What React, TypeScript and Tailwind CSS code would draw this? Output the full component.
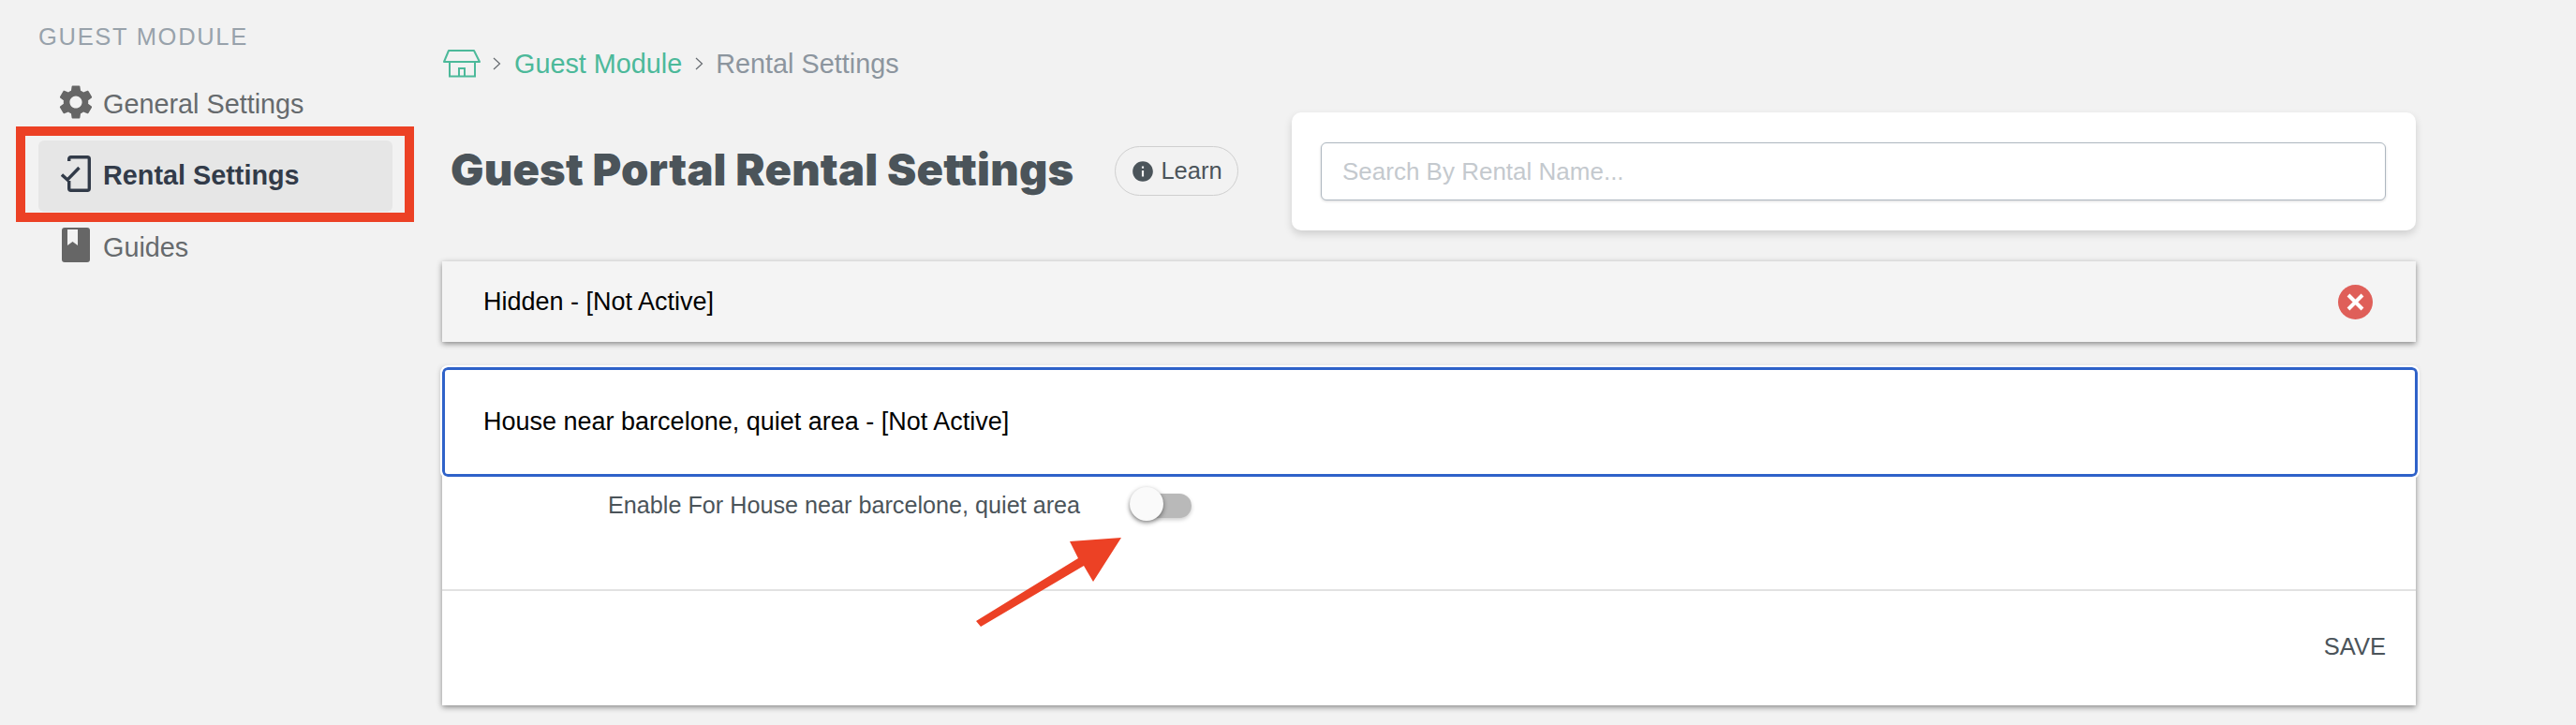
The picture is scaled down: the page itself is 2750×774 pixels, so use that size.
import { MdSettings, MdInfo } from "react-icons/md";

const sans = "font-['Liberation_Sans',Arial,sans-serif]";

function PhoneCheck() {
  return (
    <svg width="36" height="42" viewBox="0 0 36 42" fill="none" stroke="#323b49" strokeWidth="3.400" className="absolute left-[24px] top-[15px]">
      <path d="M8.700 7V4.700a2 2 0 0 1 2-2h17.600a2 2 0 0 1 2 2v31.600a2 2 0 0 1-2 2H10.700a2 2 0 0 1-2-2V28" strokeLinejoin="round" />
      <path d="M1 21.500l6 5.500 12.500-13" />
    </svg>
  );
}

function GuideBook() {
  return (
    <svg width="30" height="37" viewBox="0 0 30 37" className="absolute left-[25px] top-[17px]">
      <path fill="#666666" d="M3 0h24a3 3 0 0 1 3 3v31a3 3 0 0 1-3 3H3a3 3 0 0 1-3-3V3a3 3 0 0 1 3-3z" />
      <path fill="#f2f2f2" d="M6 2h11v17l-5.500-4L6 19z" />
    </svg>
  );
}

function HomeIcon() {
  return (
    <svg width="40" height="30" viewBox="0 0 40 30" fill="none" stroke="#4cb99a" strokeWidth="2">
      <path d="M1 13L6 1h27l6 12z" strokeLinejoin="round" />
      <path d="M7 13v15.500h27V13" />
      <path d="M17 28.500V20h6v8.500" />
    </svg>
  );
}

function Chevron() {
  return (
    <svg width="9" height="14" viewBox="0 0 9 14" fill="none" stroke="#666b70" strokeWidth="1.200">
      <path d="M1 1l6.500 6L1 13" />
    </svg>
  );
}

export default function App() {
  return (
    <div className={`relative flex h-[774px] w-[2750px] overflow-hidden bg-[#f2f2f2] ${sans}`}>
      <aside className="w-[472px] shrink-0 pl-[41px]">
        <div className="h-[74px] pt-[25px] text-[25.500px] leading-[29px] tracking-[1.700px] text-[#98a2ab]">GUEST MODULE</div>
        <nav className="w-[378px]">
          <div className="relative flex h-[76px] items-center pl-[69px] text-[28.800px] text-[#666a6d]">
            <MdSettings className="absolute left-[18px] top-[13px] text-[#666666]" size={44} />
            General Settings
          </div>
          <div className="relative flex h-[76px] items-center rounded-[6px] bg-[#e6e6e6] pl-[69px] text-[28.800px] font-bold text-[#323b49]">
            <PhoneCheck />
            Rental Settings
            <div className="absolute -left-[24px] -top-[15px] h-[102px] w-[425px] border-[10px] border-[#ec4125]" />
          </div>
          <div className="relative flex h-[76px] items-center pl-[69px] pt-[2px] text-[28.800px] text-[#666a6d]">
            <GuideBook />
            Guides
          </div>
        </nav>
      </aside>

      <main className="w-[2107px] shrink-0">
        <div className="flex h-[120px] items-start gap-[13px] pl-[1px] pt-[53px] text-[28.800px] leading-[30px]">
          <HomeIcon />
          <span className="mt-[8px]"><Chevron /></span>
          <span className="ml-[1px] text-[#4cb99a]">Guest Module</span>
          <span className="ml-[1px] mt-[8px]"><Chevron /></span>
          <span className="text-[#8c959e]">Rental Settings</span>
        </div>

        <div className="flex h-[126px] items-start">
          <h1 className="mt-[33px] w-[718px] whitespace-nowrap pl-[9px] font-['Inter',sans-serif] text-[47px] font-black leading-[56px] tracking-[0.2px] text-[#4b545a]">
            Guest Portal Rental Settings
          </h1>
          <button className="mt-[36px] flex h-[53px] w-[132px] items-center justify-center gap-[6px] rounded-full border border-[#cfcfcf] text-[25.500px] text-[#4b545a]">
            <MdInfo size={26} className="text-[#4b545a]" />
            Learn
          </button>
          <div className="ml-[57px] flex h-[126px] w-[1200px] items-center rounded-[10px] bg-white pl-[31px] pr-[32px] shadow-[0_4px_8px_rgba(0,0,0,0.15)]">
            <input
              placeholder="Search By Rental Name..."
              className="h-[62px] w-full rounded-[6px] border border-[#aeb7c0] bg-white pl-[22px] text-[26px] text-[#4b545a] placeholder:text-[#c4c9ce] shadow-[0_1px_3px_rgba(0,0,0,0.15)]"
            />
          </div>
        </div>

        <div className="mt-[33px] flex h-[86px] items-center justify-between bg-[#f4f4f4] pl-[44px] pr-[46px] text-[27px] text-black shadow-[0_2px_6px_rgba(0,0,0,0.45)]">
          <span>Hidden - [Not Active]</span>
          <svg width="37" height="37" viewBox="0 0 37 37">
            <circle cx="18.500" cy="18.500" r="18.500" fill="#df5f59" />
            <path d="M11 11l15 15M26 11L11 26" stroke="#ffffff" strokeWidth="4" />
          </svg>
        </div>

        <div className="mt-[27px] h-[361px] bg-white shadow-[0_2px_6px_rgba(0,0,0,0.45)]">
          <div className="flex h-[117px] w-[2109px] items-center rounded-[6px] border-[3.500px] border-[#2f62c9] bg-white pl-[41px] text-[27px] text-black outline-2 outline-white">
            House near barcelone, quiet area - [Not Active]
          </div>
          <div className="flex h-[122px] items-start border-b-2 border-[#e2e2e2] pl-[177px] pt-[10px]">
            <span className="mt-[4px] w-[558px] text-[25.200px] leading-[32px] text-[#4b545a]">Enable For House near barcelone, quiet area</span>
            <span className="relative mt-[8px] block h-[26px] w-[65px] rounded-full bg-[#b9b9b9] shadow-[0_2px_4px_rgba(0,0,0,0.2)]">
              <span className="absolute -left-[1px] -top-[7px] block h-[36px] w-[36px] rounded-full bg-[#fafafa] shadow-[0_2px_5px_rgba(0,0,0,0.45)]" />
            </span>
          </div>
          <div className="flex justify-end pr-[32px] pt-[44px] text-[25.500px] leading-[30px] text-[#4b545a]">SAVE</div>
        </div>
      </main>

      <svg className="pointer-events-none absolute left-0 top-0" width="2750" height="774" viewBox="0 0 2750 774">
        <polygon fill="#ec4125" points="1042,663 1047,669 1157,604 1167,621 1197,574 1142,578 1151,596" />
      </svg>
    </div>
  );
}
